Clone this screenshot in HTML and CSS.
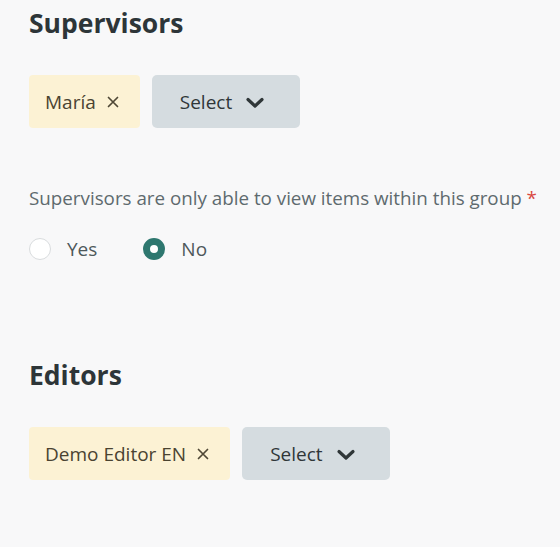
FILE: index.html
```html
<!DOCTYPE html>
<html lang="en">
<head>
<meta charset="utf-8">
<title>Group members</title>
<link rel="stylesheet" href="styles.css">
</head>
<body>
<main class="page">
  <section class="group">
    <h2 class="group-title">Supervisors</h2>
    <div class="chips">
      <span class="chip">María
        <svg class="chip-x" viewBox="0 0 12 12" width="12" height="12"><path d="M1.5 1.5 L10.5 10.5 M10.5 1.5 L1.5 10.5" fill="none" stroke="currentColor" stroke-width="1.7" stroke-linecap="round"/></svg>
      </span>
      <button class="select">Select
        <svg class="chev" viewBox="0 0 20 13" width="20" height="13"><path d="M3 3.5 L10 10 L17 3.5" fill="none" stroke="currentColor" stroke-width="3.2" stroke-linecap="round" stroke-linejoin="round"/></svg>
      </button>
    </div>
    <p class="question">Supervisors are only able to view items within this group <span class="req">*</span></p>
    <div class="radios">
      <label class="radio"><span class="dot"></span>Yes</label>
      <label class="radio"><span class="dot on"></span>No</label>
    </div>
  </section>
  <section class="group editors">
    <h2 class="group-title">Editors</h2>
    <div class="chips">
      <span class="chip">Demo Editor EN
        <svg class="chip-x" viewBox="0 0 12 12" width="12" height="12"><path d="M1.5 1.5 L10.5 10.5 M10.5 1.5 L1.5 10.5" fill="none" stroke="currentColor" stroke-width="1.7" stroke-linecap="round"/></svg>
      </span>
      <button class="select">Select
        <svg class="chev" viewBox="0 0 20 13" width="20" height="13"><path d="M3 3.5 L10 10 L17 3.5" fill="none" stroke="currentColor" stroke-width="3.2" stroke-linecap="round" stroke-linejoin="round"/></svg>
      </button>
    </div>
  </section>
</main>
</body>
</html>
```
FILE: styles.css
```css
html, body {
  margin: 0;
  padding: 0;
  background: #f8f8f9;
}
body {
  font-family: "Open Sans", "Noto Sans", sans-serif;
  color: #2f3638;
}
.page {
  padding: 5px 29px 0;
}
.group-title {
  margin: 0;
  font-size: 26.5px;
  line-height: 36px;
  font-weight: 700;
  color: #2d3538;
}
.chips {
  display: flex;
  gap: 12px;
  margin-top: 34px;
}
.chip {
  display: inline-flex;
  align-items: center;
  gap: 11px;
  height: 53px;
  padding: 0 21px 0 16px;
  background: #fcf2d4;
  border-radius: 4px;
  font-size: 19px;
  color: #4a4331;
  box-sizing: border-box;
}
.chip-x {
  color: #4f4836;
}
.select {
  display: inline-flex;
  align-items: center;
  justify-content: flex-start;
  gap: 13px;
  width: 148px;
  height: 53px;
  border: 0;
  border-radius: 5px;
  background: #d5dce0;
  font-family: inherit;
  font-size: 19px;
  color: #2f3638;
  padding: 0 0 0 28px;
}
.chev {
  color: #2f3638;
  margin-top: 1px;
}
.question {
  margin: 57px 0 0;
  font-size: 18.8px;
  line-height: 26px;
  color: #5e6a6e;
  white-space: nowrap;
}
.req { color: #d9473f; }
.radios {
  display: flex;
  gap: 46px;
  margin-top: 25px;
}
.radio {
  display: inline-flex;
  align-items: center;
  gap: 16px;
  font-size: 19px;
  color: #4e585b;
}
.dot {
  width: 22px;
  height: 22px;
  border-radius: 50%;
  box-sizing: border-box;
  border: 1px solid #d9dcde;
  background: #fff;
}
.dot.on {
  border: 7px solid #2e776f;
  background: #fff;
}
.editors {
  margin-top: 95px;
}
```
